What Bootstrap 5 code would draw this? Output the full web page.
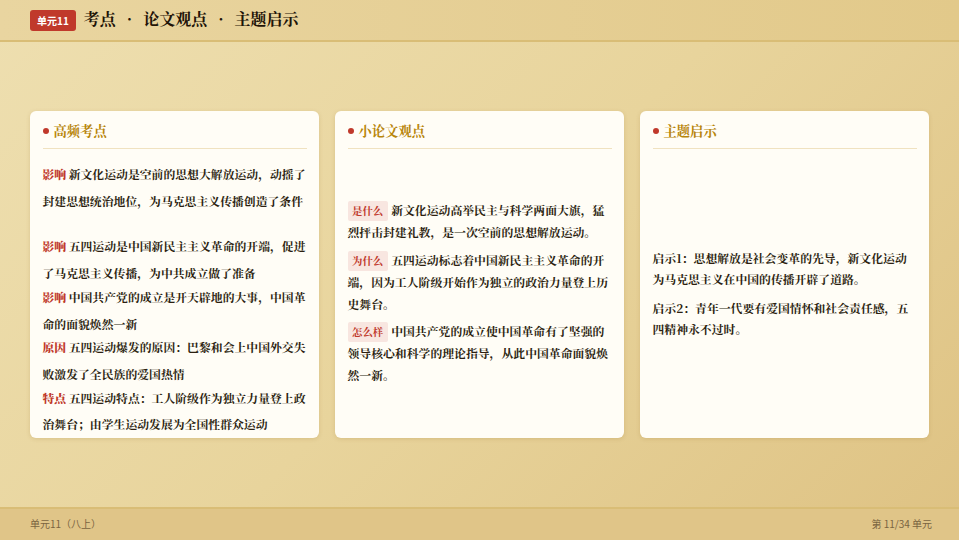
<!DOCTYPE html>
<html lang="zh-CN">
<head>
    <meta charset="UTF-8">
    <meta name="viewport" content="width=device-width, initial-scale=1.0">
    <title>单元11</title>
    <link href="https://cdn.jsdelivr.net/npm/bootstrap@5.3.0/dist/css/bootstrap.min.css" rel="stylesheet">
    <style>
        html, body { height: 100%; }
        body {
            background: linear-gradient(135deg, #eedfb0 0%, #e8d49c 50%, #dec283 100%);
            font-family: "Noto Serif CJK SC", "Liberation Serif", "Noto Sans CJK SC", serif;
            color: #2c1f10;
            overflow: hidden;
        }
        .slide-head {
            height: 42px;
            padding: 0 30px;
            background: linear-gradient(90deg, #e9d5a0, #e2c98a);
            border-bottom: 2px solid #d9bd76;
            gap: 8px;
        }
        .unit-tag {
            background: #c0392b;
            color: #fff;
            font: 700 10px "Noto Sans CJK SC", sans-serif;
            padding: 5px 7px;
            border-radius: 3px;
            line-height: 11px;
        }
        .slide-title { font-size: 16px; font-weight: 700; color: #1f1408; margin: 0; padding-bottom: 2px; word-spacing: 7px; }
        .slide-main { padding: 0 30px; gap: 16px; }
        .panel {
            flex: 1 1 0;
            height: 327px;
            background: #fffdf6;
            border-radius: 6px;
            padding: 11px 12.5px 0;
            box-shadow: 0 1px 4px rgba(140, 100, 30, .18);
            min-width: 0;
        }
        .panel-title {
            font-size: 13.3px;
            font-weight: 700;
            color: #b8860b;
            line-height: 18px;
            padding-bottom: 8px;
            border-bottom: 1px solid #f0e2c0;
            gap: 5px;
        }
        .panel-dot { width: 6px; height: 6px; border-radius: 50%; background: #c0392b; }
        .panel-body { min-height: 0; font-size: 11.85px; font-weight: 700; padding-bottom: 2px; }
        .facts { padding: 11px 0 0; }
        .fact { line-height: 23.7px; margin: 0; }
        .fact b { display: inline-block; color: #c0392b; padding-bottom: 3px; margin-right: 2.5px; }
        .fact-gap { margin-bottom: 22px; }
        .view { line-height: 22px; margin: 0 0 5.8px; }
        .view-tag {
            display: inline-block;
            background: #f8e6e0;
            color: #c0392b;
            font-size: 10.4px;
            line-height: 20px;
            padding: 0 4.5px;
            border-radius: 2px;
            margin-right: 3.5px;
        }
        .hint { line-height: 21px; margin: 0 0 8px; }
        .view:last-child, .hint:last-child { margin-bottom: 0; }
        .slide-foot {
            height: 33px;
            padding: 0 27px 2px 30px;
            border-top: 2px solid #d9bd76;
            background: #e0c588;
            font: 10px "Noto Sans CJK SC", sans-serif;
            color: #7a6440;
        }
    </style>
</head>
<body class="d-flex flex-column">
    <header class="slide-head d-flex align-items-center flex-shrink-0">
        <span class="unit-tag">单元11</span>
        <h1 class="slide-title">考点 · 论文观点 · 主题启示</h1>
    </header>

    <main class="slide-main flex-grow-1 d-flex align-items-center">
        <section class="panel d-flex flex-column">
            <div class="panel-title d-flex align-items-center flex-shrink-0"><span class="panel-dot"></span>高频考点</div>
            <div class="panel-body facts flex-grow-1 d-flex flex-column justify-content-center">
                <p class="fact fact-gap"><b>影响</b>新文化运动是空前的思想大解放运动，动摇了封建思想统治地位，为马克思主义传播创造了条件</p>
                <p class="fact"><b>影响</b>五四运动是中国新民主主义革命的开端，促进了马克思主义传播，为中共成立做了准备</p>
                <p class="fact"><b>影响</b>中国共产党的成立是开天辟地的大事，中国革命的面貌焕然一新</p>
                <p class="fact"><b>原因</b>五四运动爆发的原因：巴黎和会上中国外交失败激发了全民族的爱国热情</p>
                <p class="fact"><b>特点</b>五四运动特点：工人阶级作为独立力量登上政治舞台；由学生运动发展为全国性群众运动</p>
            </div>
        </section>
        <section class="panel d-flex flex-column">
            <div class="panel-title d-flex align-items-center flex-shrink-0"><span class="panel-dot"></span>小论文观点</div>
            <div class="panel-body flex-grow-1 d-flex flex-column justify-content-center">
                <p class="view"><span class="view-tag">是什么</span>新文化运动高举民主与科学两面大旗，猛烈抨击封建礼教，是一次空前的思想解放运动。</p>
                <p class="view"><span class="view-tag">为什么</span>五四运动标志着中国新民主主义革命的开端，因为工人阶级开始作为独立的政治力量登上历史舞台。</p>
                <p class="view"><span class="view-tag">怎么样</span>中国共产党的成立使中国革命有了坚强的领导核心和科学的理论指导，从此中国革命面貌焕然一新。</p>
            </div>
        </section>
        <section class="panel d-flex flex-column">
            <div class="panel-title d-flex align-items-center flex-shrink-0"><span class="panel-dot"></span>主题启示</div>
            <div class="panel-body flex-grow-1 d-flex flex-column justify-content-center">
                <p class="hint">启示1：思想解放是社会变革的先导，新文化运动为马克思主义在中国的传播开辟了道路。</p>
                <p class="hint">启示2：青年一代要有爱国情怀和社会责任感，五四精神永不过时。</p>
            </div>
        </section>
    </main>

    <footer class="slide-foot d-flex align-items-center justify-content-between flex-shrink-0">
        <span>单元11（八上）</span>
        <span>第 11/34 单元</span>
    </footer>

    <script src="https://cdn.jsdelivr.net/npm/bootstrap@5.3.0/dist/js/bootstrap.bundle.min.js"></script>
</body>
</html>
